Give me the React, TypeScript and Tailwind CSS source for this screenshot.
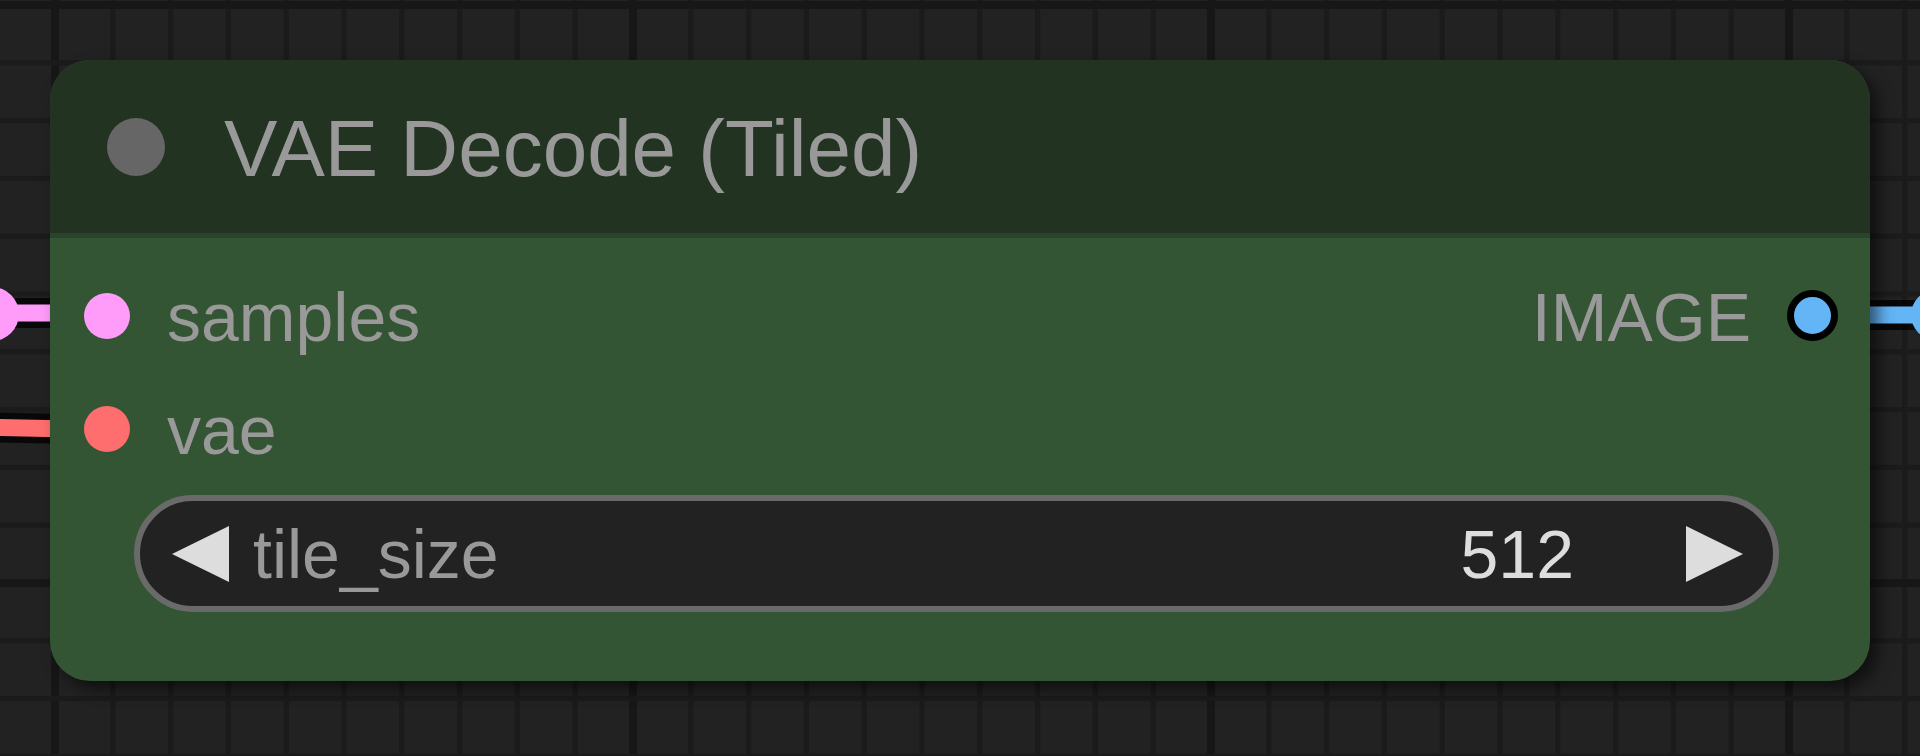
import React from "react";

const W = 1920;
const H = 756;
const CELL = 57.8;

function Grid() {
  const xs: number[] = [];
  const ys: number[] = [];
  for (let k = -2; k < 40; k++) {
    const x = 55 + CELL * k;
    if (x > -10 && x < W + 10) xs.push(k);
    const y = 5 + CELL * k;
    if (y > -10 && y < H + 10) ys.push(k);
  }
  return (
    <svg className="absolute inset-0" width={W} height={H}>
      <rect x={0} y={0} width={W} height={H} fill="#222222" />
      {xs.map((k) => {
        const x = 55 + CELL * k;
        const thick = ((k % 10) + 10) % 10 === 0;
        const w = thick ? 8 : 5;
        return <rect key={"x" + k} x={x - w / 2} y={0} width={w} height={H} fill={thick ? "#171717" : "#1b1b1b"} />;
      })}
      {ys.map((k) => {
        const y = 5 + CELL * k;
        const thick = ((k % 10) + 10) % 10 === 0;
        const w = thick ? 8 : 5;
        return <rect key={"y" + k} x={0} y={y - w / 2} width={W} height={w} fill={thick ? "#171717" : "#1b1b1b"} />;
      })}
    </svg>
  );
}

function Wires() {
  return (
    <svg className="absolute inset-0" width={W} height={H}>
      <line x1={-20} y1={313} x2={70} y2={313} stroke="#000" strokeOpacity={0.75} strokeWidth={30} />
      <line x1={-20} y1={313} x2={70} y2={313} stroke="#ff9cf9" strokeWidth={17} />
      <circle cx={-8} cy={314} r={27} fill="#ff9cf9" />
      <line x1={-20} y1={427} x2={70} y2={429} stroke="#000" strokeOpacity={0.75} strokeWidth={30} />
      <line x1={-20} y1={427} x2={70} y2={429} stroke="#ff6e6e" strokeWidth={17} />
      <line x1={1850} y1={315} x2={1940} y2={315} stroke="#000" strokeOpacity={0.75} strokeWidth={30} />
      <line x1={1850} y1={315} x2={1940} y2={315} stroke="#64b5f6" strokeWidth={17} />
      <circle cx={1936} cy={315} r={25} fill="#64b5f6" />
    </svg>
  );
}

function Arrow({ dir }: { dir: "left" | "right" }) {
  return (
    <svg width={57} height={56} viewBox="0 0 57 56" className="shrink-0">
      {dir === "left" ? (
        <polygon points="57,0 57,56 0,28" fill="#dddddd" />
      ) : (
        <polygon points="0,0 0,56 57,28" fill="#dddddd" />
      )}
    </svg>
  );
}

export default function App() {
  return (
    <div className="relative w-[1920px] h-[756px] overflow-hidden bg-[#222222] font-['Liberation_Sans',Arial,sans-serif]">
      <Grid />
      <Wires />
      <div className="absolute left-[50px] top-[60px] w-[1820px] h-[621px] rounded-[40px] bg-[#335533] shadow-[8px_8px_16px_rgba(0,0,0,0.55)] flex flex-col overflow-hidden">
        <div className="h-[173px] shrink-0 bg-[#223322] flex items-center pl-[57px]">
          <div className="w-[58px] h-[58px] rounded-full bg-[#666666] shrink-0" />
          <span className="ml-[59px] mt-[4px] text-[80px] leading-none text-[#999999] whitespace-nowrap">VAE Decode (Tiled)</span>
        </div>
        <div className="h-[5px] shrink-0 bg-[#2a432a]" />
        <div className="flex flex-col pt-[21px]">
          <div className="h-[113px] flex items-center justify-between pl-[34px] pr-[32px]">
            <div className="flex items-center">
              <div className="w-[46px] h-[46px] rounded-full bg-[#ff9cf9]" />
              <span className="ml-[37px] mt-[3px] text-[68px] leading-none text-[#999999]">samples</span>
            </div>
            <div className="flex items-center">
              <span className="mt-[3px] text-[68px] leading-none text-[#999999]">IMAGE</span>
              <div className="ml-[36px] w-[51px] h-[51px] rounded-full bg-[#64b5f6] border-[7px] border-black" />
            </div>
          </div>
          <div className="h-[113px] flex items-center pl-[34px] pr-[32px]">
            <div className="w-[46px] h-[46px] rounded-full bg-[#ff6e6e]" />
            <span className="ml-[37px] mt-[3px] text-[68px] leading-none text-[#999999]">vae</span>
          </div>
          <div className="mt-[10px] ml-[84px] mr-[91px] h-[117px] rounded-full border-[6px] border-[#6a6a6a] bg-[#222222] flex items-center pl-[32px] pr-[30px]">
            <Arrow dir="left" />
            <span className="ml-[24px] text-[68px] leading-none text-[#999999]">tile_size</span>
            <div className="flex-1" />
            <span className="text-[68px] leading-none text-[#dddddd]">512</span>
            <div className="w-[112px]" />
            <Arrow dir="right" />
          </div>
        </div>
      </div>
    </div>
  );
}
